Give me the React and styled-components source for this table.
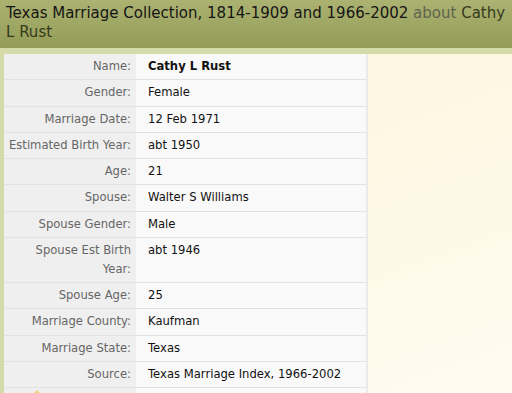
import React from 'react';
import styled, { createGlobalStyle } from 'styled-components';

const GlobalStyle = createGlobalStyle`
  html, body {
    margin: 0;
    padding: 0;
    background: #fef8e4;
  }
  body {
    font-family: 'DejaVu Sans', Verdana, sans-serif;
    overflow: hidden;
  }
`;

const Page = styled.div`
  width: 512px;
  height: 393px;
  display: flex;
  flex-direction: column;
  background: linear-gradient(160deg, #fdf5dc 0%, #fef8e6 60%, #fffbf0 100%);
`;

const Header = styled.h1`
  margin: 0;
  padding: 4px 6px 6px;
  font-family: 'DejaVu Sans', Verdana, sans-serif;
  font-weight: normal;
  font-size: 15px;
  line-height: 19px;
  color: #151515;
  background: linear-gradient(to bottom, #acb372 0%, #9ea663 55%, #939c56 100%);
  border-bottom: 6px solid #d4dba9;
`;

const About = styled.span`
  color: #5e6450;
`;

const Person = styled.span`
  color: #353a1c;
`;

const Body = styled.div`
  flex: 1;
  display: flex;
  align-items: flex-start;
  border-left: 4px solid #d4dba8;
  position: relative;
`;

const RecordTable = styled.table`
  width: 364px;
  border-collapse: collapse;
  border-right: 2px solid #ebebeb;
  font-size: 11.6px;
`;

const Row = styled.tr`
  border-bottom: 1px solid #e2e2e2;
`;

const Label = styled.th`
  width: 127px;
  padding: 3px 5px 3.25px 0;
  background: #efefef;
  color: #666;
  font-weight: normal;
  text-align: right;
  vertical-align: top;
  line-height: 19px;
`;

const Value = styled.td`
  padding: 3px 6px 3.25px 12px;
  background: #f9f9f9;
  color: #111;
  vertical-align: top;
  line-height: 19px;
  font-weight: ${p => (p.$strong ? 'bold' : 'normal')};
`;

const Pointer = styled.div`
  position: absolute;
  left: 27px;
  bottom: -1px;
  width: 0;
  height: 0;
  border-left: 6px solid transparent;
  border-right: 6px solid transparent;
  border-bottom: 6px solid #f0d27a;
`;

const rows = [
  ['Name:', 'Cathy L Rust', true],
  ['Gender:', 'Female'],
  ['Marriage Date:', '12 Feb 1971'],
  ['Estimated Birth Year:', 'abt 1950'],
  ['Age:', '21'],
  ['Spouse:', 'Walter S Williams'],
  ['Spouse Gender:', 'Male'],
  ['Spouse Est Birth Year:', 'abt 1946'],
  ['Spouse Age:', '25'],
  ['Marriage County:', 'Kaufman'],
  ['Marriage State:', 'Texas'],
  ['Source:', 'Texas Marriage Index, 1966-2002'],
  ['', ''],
];

export default function App() {
  return (
    <>
      <GlobalStyle />
      <Page>
        <Header>
          Texas Marriage Collection, 1814-1909 and 1966-2002 <About>about</About>{' '}
          <Person>Cathy L Rust</Person>
        </Header>
        <Body>
          <RecordTable>
            <tbody>
              {rows.map(([label, value, strong], i) => (
                <Row key={i}>
                  <Label>{label}</Label>
                  <Value $strong={strong}>{value}</Value>
                </Row>
              ))}
            </tbody>
          </RecordTable>
          <Pointer />
        </Body>
      </Page>
    </>
  );
}
